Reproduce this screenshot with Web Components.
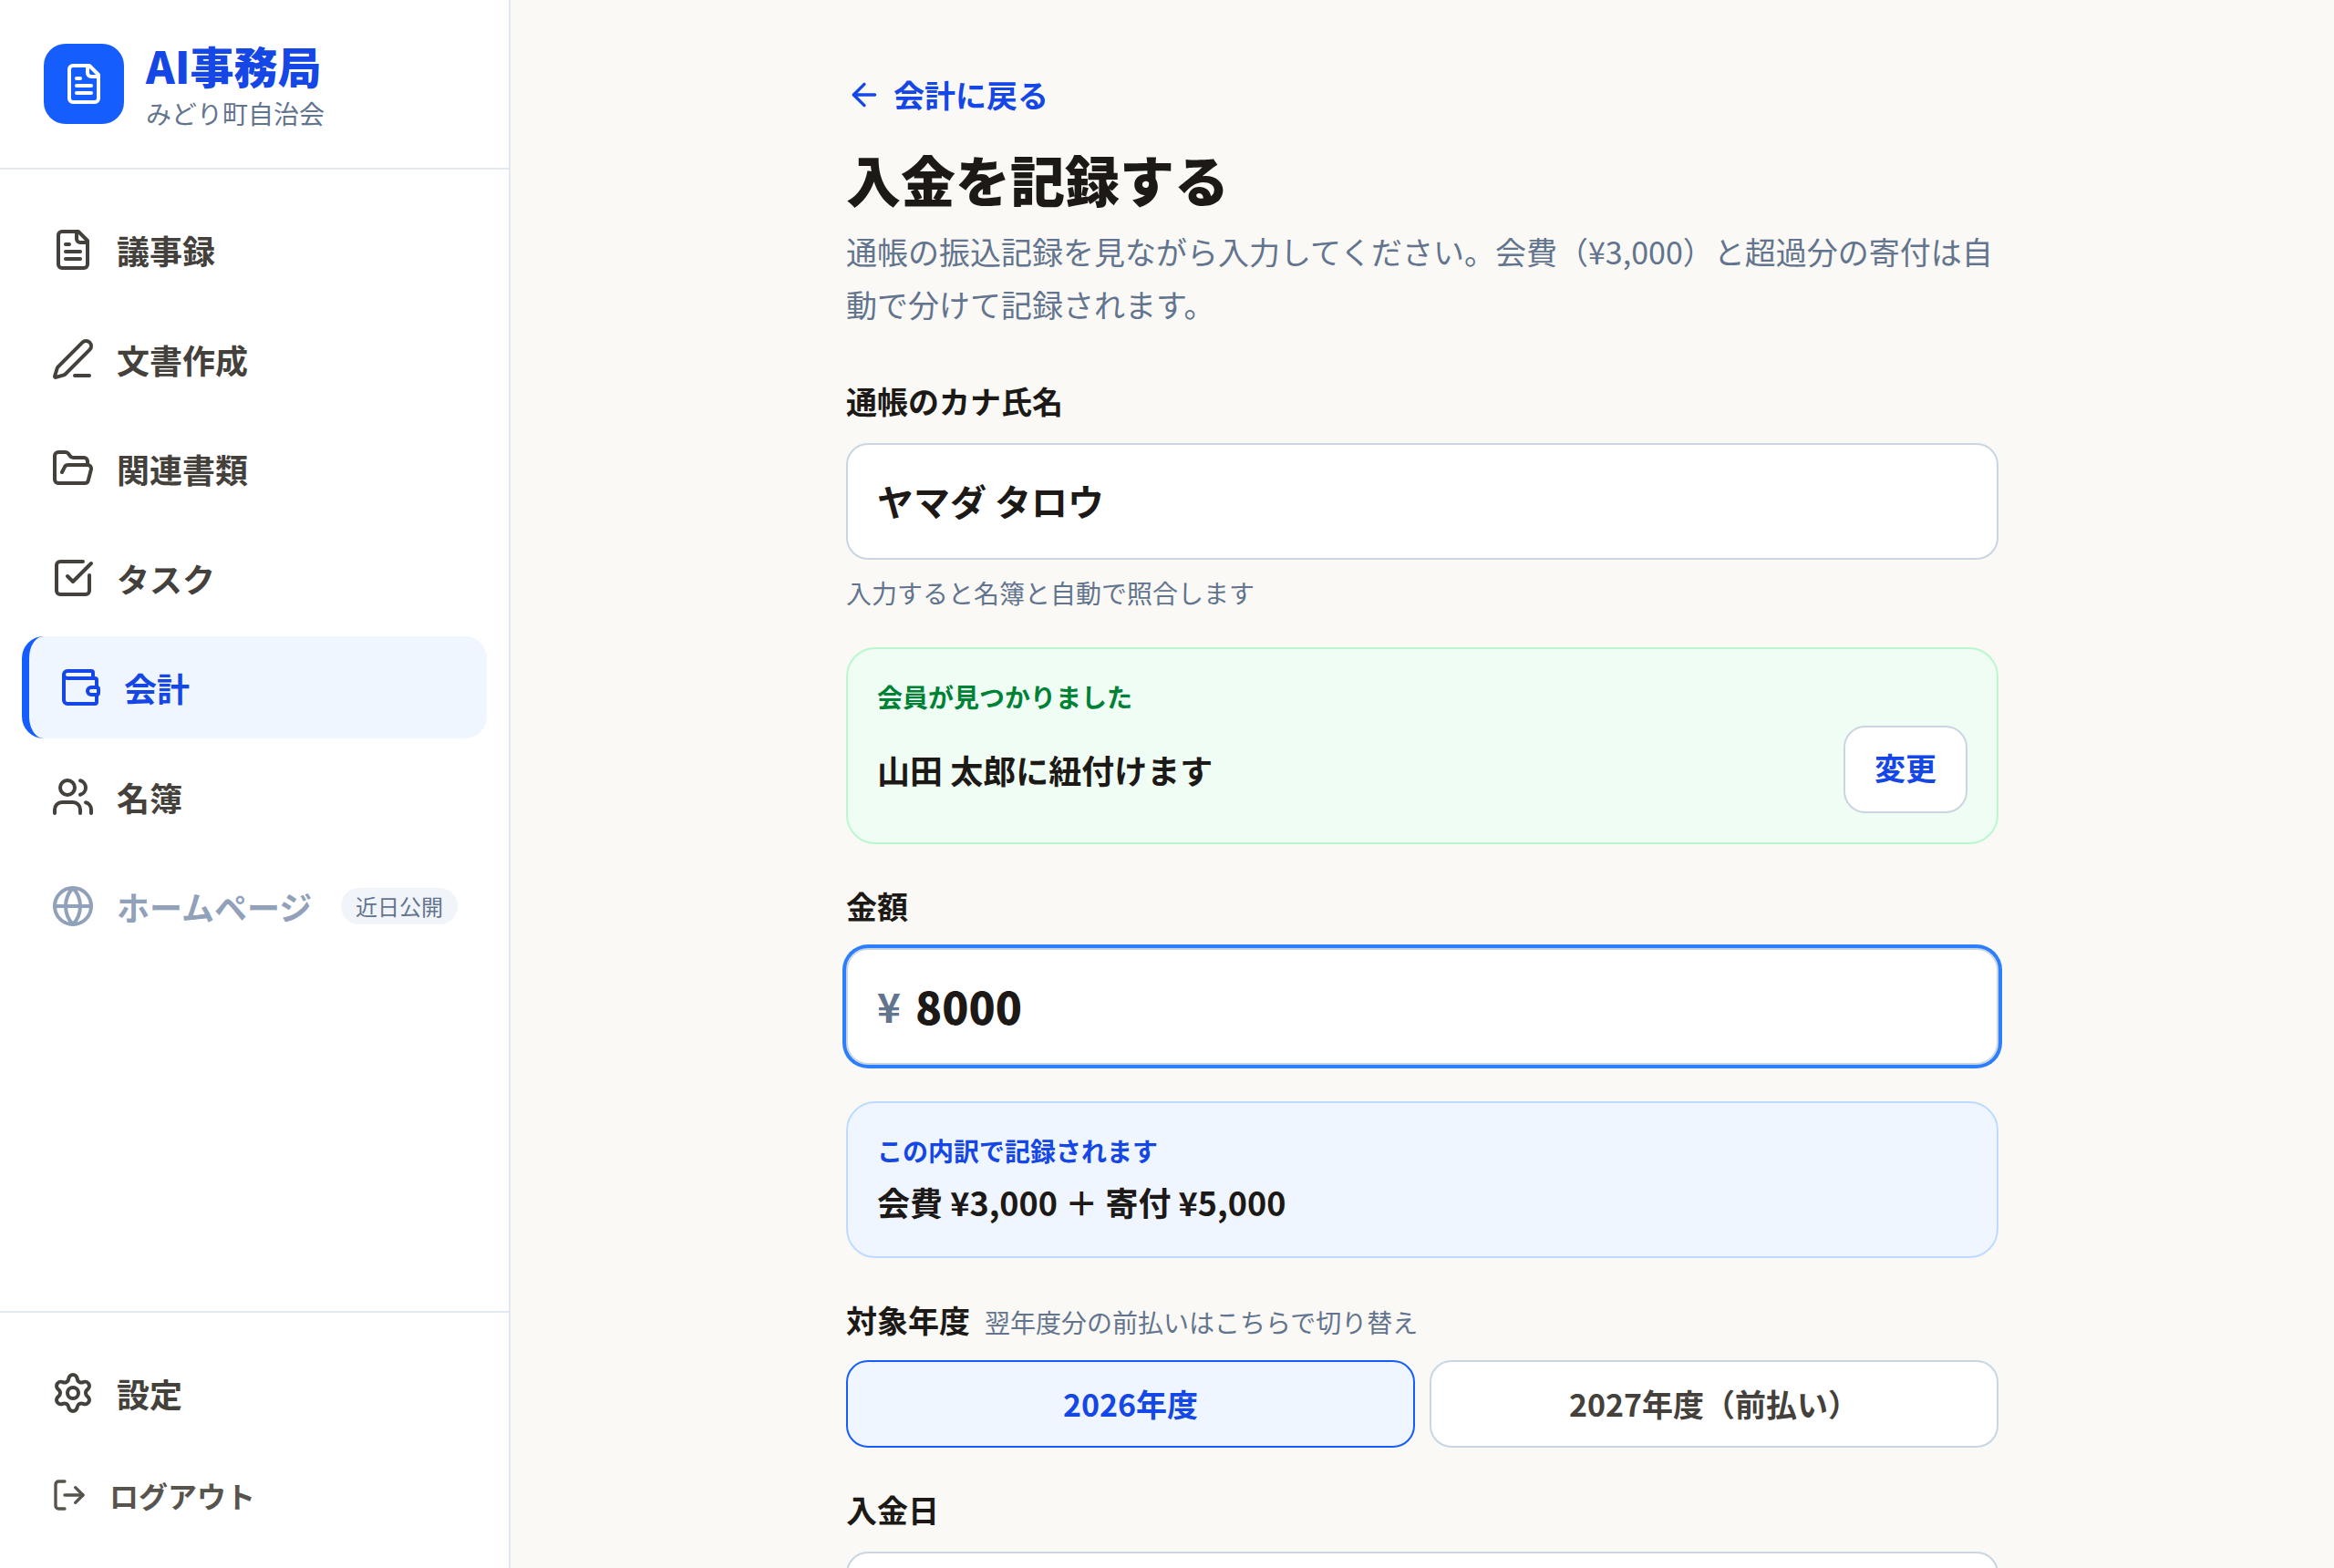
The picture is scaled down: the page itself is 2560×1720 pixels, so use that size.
<!DOCTYPE html>
<html lang="ja">
<head>
<meta charset="utf-8">
<title>入金を記録する | AI事務局</title>
<style>
  html, body { margin: 0; height: 100%; }
  body {
    overflow: hidden;
    font-family: "Noto Sans CJK JP", "Noto Sans", sans-serif;
    color: #1c1917;
    --blue: #155dfc;
    --blue-dark: #1447e6;
    --blue-soft: #eff6ff;
    --muted: #62748e;
    --line: #e2e8f0;
    --border: #cad5e2;
    --page: #faf9f5;
  }
</style>
</head>
<body>
<app-shell>
  <app-sidebar slot="sidebar">
    <brand-mark slot="brand" org="みどり町自治会">AI事務局</brand-mark>
    <nav-item icon="file">議事録</nav-item>
    <nav-item icon="pen">文書作成</nav-item>
    <nav-item icon="folder">関連書類</nav-item>
    <nav-item icon="check">タスク</nav-item>
    <nav-item icon="wallet" active>会計</nav-item>
    <nav-item icon="users">名簿</nav-item>
    <nav-item icon="globe" disabled badge="近日公開">ホームページ</nav-item>
    <nav-item slot="footer" icon="settings">設定</nav-item>
    <nav-item slot="footer" icon="logout" small>ログアウト</nav-item>
  </app-sidebar>

  <page-header back="会計に戻る" heading="入金を記録する">通帳の振込記録を見ながら入力してください。会費（¥3,000）と超過分の寄付は自動で分けて記録されます。</page-header>

  <form-field label="通帳のカナ氏名" help="入力すると名簿と自動で照合します">
    <text-box>ヤマダ タロウ</text-box>
  </form-field>

  <info-card tone="green" heading="会員が見つかりました">
    山田 太郎に紐付けます
    <choice-button slot="action" link>変更</choice-button>
  </info-card>

  <form-field label="金額">
    <text-box prefix="¥" focused>8000</text-box>
  </form-field>

  <info-card tone="blue" heading="この内訳で記録されます">会費 ¥3,000 ＋ 寄付 ¥5,000</info-card>

  <form-field label="対象年度" hint="翌年度分の前払いはこちらで切り替え">
    <choice-button selected>2026年度</choice-button>
    <choice-button>2027年度（前払い）</choice-button>
  </form-field>

  <form-field label="入金日">
    <text-box></text-box>
  </form-field>
</app-shell>

<script>
const ICONS = {
  file: '<path d="M15 2H6a2 2 0 0 0-2 2v16a2 2 0 0 0 2 2h12a2 2 0 0 0 2-2V7Z"/><path d="M14 2v4a2 2 0 0 0 2 2h4"/><path d="M10 9H8"/><path d="M16 13H8"/><path d="M16 17H8"/>',
  pen: '<path d="M13 21h8"/><path d="M21.174 6.812a1 1 0 0 0-3.986-3.987L3.842 16.174a2 2 0 0 0-.5.83l-1.321 4.352a.5.5 0 0 0 .623.622l4.353-1.32a2 2 0 0 0 .83-.497z"/>',
  folder: '<path d="m6 14 1.5-2.9A2 2 0 0 1 9.24 10H20a2 2 0 0 1 1.94 2.5l-1.54 6a2 2 0 0 1-1.95 1.5H4a2 2 0 0 1-2-2V5a2 2 0 0 1 2-2h3.9a2 2 0 0 1 1.69.9l.81 1.2a2 2 0 0 0 1.67.9H18a2 2 0 0 1 2 2v2"/>',
  check: '<path d="M21 10.5V19a2 2 0 0 1-2 2H5a2 2 0 0 1-2-2V5a2 2 0 0 1 2-2h12.5"/><path d="m9 11 3 3L22 4"/>',
  wallet: '<path d="M19 7V4a1 1 0 0 0-1-1H5a2 2 0 0 0 0 4h15a1 1 0 0 1 1 1v4h-3a2 2 0 0 0 0 4h3a1 1 0 0 0 1-1v-2a1 1 0 0 0-1-1"/><path d="M3 5v14a2 2 0 0 0 2 2h15a1 1 0 0 0 1-1v-4"/>',
  users: '<path d="M16 21v-2a4 4 0 0 0-4-4H6a4 4 0 0 0-4 4v2"/><path d="M16 3.128a4 4 0 0 1 0 7.744"/><path d="M22 21v-2a4 4 0 0 0-3-3.87"/><circle cx="9" cy="7" r="4"/>',
  globe: '<circle cx="12" cy="12" r="10"/><path d="M12 2a14.5 14.5 0 0 0 0 20 14.5 14.5 0 0 0 0-20"/><path d="M2 12h20"/>',
  settings: '<path d="M9.671 4.136a2.34 2.34 0 0 1 4.659 0 2.34 2.34 0 0 0 3.319 1.915 2.34 2.34 0 0 1 2.33 4.033 2.34 2.34 0 0 0 0 3.831 2.34 2.34 0 0 1-2.33 4.033 2.34 2.34 0 0 0-3.319 1.915 2.34 2.34 0 0 1-4.659 0 2.34 2.34 0 0 0-3.32-1.915 2.34 2.34 0 0 1-2.33-4.033 2.34 2.34 0 0 0 0-3.831A2.34 2.34 0 0 1 6.35 6.051a2.34 2.34 0 0 0 3.319-1.915"/><circle cx="12" cy="12" r="3"/>',
  logout: '<path d="m16 17 5-5-5-5"/><path d="M21 12H9"/><path d="M9 21H5a2 2 0 0 1-2-2V5a2 2 0 0 1 2-2h4"/>',
  back: '<path d="m12 19-7-7 7-7"/><path d="M19 12H5"/>'
};

class LineIcon extends HTMLElement {
  constructor() {
    super();
    this.attachShadow({ mode: "open" });
  }

  connectedCallback() {
    this.shadowRoot.innerHTML = `
      <style>
        :host { display: block; flex: none; width: 48px; height: 48px; }
        svg { display: block; width: 100%; height: 100%; }
      </style>
      <svg viewBox="0 0 24 24" fill="none" stroke="currentColor" stroke-width="2" stroke-linecap="round" stroke-linejoin="round" aria-hidden="true">${ICONS[this.getAttribute("name")] || ""}</svg>
    `;
  }
}

class AppShell extends HTMLElement {
  constructor() {
    super();
    this.attachShadow({ mode: "open" });
    this.shadowRoot.innerHTML = `
      <style>
        :host {
          display: grid;
          grid-template-columns: 560px 1fr;
          height: 100vh;
          overflow: hidden;
          background: var(--page);
        }
        main {
          min-width: 0;
          overflow: hidden;
        }
        .column {
          display: flex;
          flex-direction: column;
          gap: 40px;
          width: 1264px;
          margin: 0 auto;
          padding: 64px 0;
        }
      </style>
      <slot name="sidebar"></slot>
      <main><div class="column"><slot></slot></div></main>
    `;
  }
}

class AppSidebar extends HTMLElement {
  constructor() {
    super();
    this.attachShadow({ mode: "open" });
    this.shadowRoot.innerHTML = `
      <style>
        :host {
          display: flex;
          flex-direction: column;
          box-sizing: border-box;
          height: 100vh;
          background: #fff;
          border-right: 2px solid var(--line);
        }
        header {
          padding: 48px;
          border-bottom: 2px solid var(--line);
        }
        nav, footer {
          display: flex;
          flex-direction: column;
          gap: 8px;
          padding: 32px 24px;
        }
        nav { flex: 1; }
        footer { border-top: 2px solid var(--line); }
      </style>
      <header><slot name="brand"></slot></header>
      <nav><slot></slot></nav>
      <footer><slot name="footer"></slot></footer>
    `;
  }
}

class BrandMark extends HTMLElement {
  constructor() {
    super();
    this.attachShadow({ mode: "open" });
  }

  connectedCallback() {
    this.shadowRoot.innerHTML = `
      <style>
        :host { display: flex; align-items: center; gap: 24px; height: 88px; }
        .tile {
          display: grid;
          place-items: center;
          width: 88px;
          height: 88px;
          border-radius: 24px;
          background: var(--blue);
          color: #fff;
        }
        .name {
          font-size: 48px;
          font-weight: 800;
          line-height: 60px;
          color: var(--blue-dark);
        }
        .org {
          margin-top: 3px;
          font-size: 28px;
          line-height: 40px;
          color: var(--muted);
        }
      </style>
      <div class="tile"><line-icon name="file"></line-icon></div>
      <div>
        <div class="name"><slot></slot></div>
        <div class="org">${this.getAttribute("org")}</div>
      </div>
    `;
  }
}

class NavItem extends HTMLElement {
  constructor() {
    super();
    this.attachShadow({ mode: "open" });
  }

  connectedCallback() {
    const badge = this.getAttribute("badge");
    this.shadowRoot.innerHTML = `
      <style>
        :host {
          display: flex;
          align-items: center;
          gap: 24px;
          box-sizing: border-box;
          height: 112px;
          padding: 0 32px;
          border-radius: 24px;
          font-size: 36px;
          font-weight: 700;
          line-height: 56px;
          color: #44403b;
          white-space: nowrap;
        }
        :host([active]) {
          border-left: 8px solid var(--blue);
          background: var(--blue-soft);
          color: var(--blue-dark);
        }
        :host([disabled]) { color: #90a1b9; }
        :host([small]) {
          height: 96px;
          font-size: 32px;
          color: #57534d;
        }
        :host([small]) line-icon { width: 40px; height: 40px; }
        .badge {
          margin-left: auto;
          padding: 0 16px;
          border-radius: 20px;
          background: #f1f5f9;
          font-size: 24px;
          font-weight: 400;
          line-height: 40px;
          color: var(--muted);
        }
      </style>
      <line-icon name="${this.getAttribute("icon")}"></line-icon>
      <span><slot></slot></span>
      ${badge ? `<span class="badge">${badge}</span>` : ""}
    `;
  }
}

class PageHeader extends HTMLElement {
  constructor() {
    super();
    this.attachShadow({ mode: "open" });
  }

  connectedCallback() {
    this.shadowRoot.innerHTML = `
      <style>
        :host { display: block; margin-bottom: 9px; }
        a {
          display: inline-flex;
          align-items: center;
          gap: 12px;
          height: 80px;
          font-size: 34px;
          font-weight: 700;
          color: var(--blue-dark);
          text-decoration: none;
        }
        a line-icon { width: 40px; height: 40px; }
        a span { padding-bottom: 2px; }
        h1 {
          margin: 16px 0 15px;
          font-size: 60px;
          font-weight: 800;
          line-height: 72px;
        }
        p {
          margin: 0;
          font-size: 34px;
          line-height: 58px;
          color: var(--muted);
        }
        .top { display: flex; }
      </style>
      <div class="top"><a href="#"><line-icon name="back"></line-icon><span>${this.getAttribute("back")}</span></a></div>
      <h1>${this.getAttribute("heading")}</h1>
      <p><slot></slot></p>
    `;
  }
}

class FormField extends HTMLElement {
  constructor() {
    super();
    this.attachShadow({ mode: "open" });
  }

  connectedCallback() {
    const help = this.getAttribute("help");
    const hint = this.getAttribute("hint");
    this.shadowRoot.innerHTML = `
      <style>
        :host { display: block; }
        .label {
          display: flex;
          align-items: baseline;
          gap: 16px;
          height: 56px;
          margin-bottom: 18px;
          font-size: 34px;
          font-weight: 700;
          line-height: 56px;
        }
        .label.hinted { margin-bottom: 16px; }
        .hint, .help {
          font-size: 28px;
          font-weight: 400;
          color: var(--muted);
        }
        .help { margin-top: 16px; line-height: 40px; }
        .controls { display: flex; gap: 16px; }
        ::slotted(*) { flex: 1; }
      </style>
      <div class="label${hint ? " hinted" : ""}"><span>${this.getAttribute("label")}</span>${hint ? `<span class="hint">${hint}</span>` : ""}</div>
      <div class="controls"><slot></slot></div>
      ${help ? `<div class="help">${help}</div>` : ""}
    `;
  }
}

class TextBox extends HTMLElement {
  constructor() {
    super();
    this.attachShadow({ mode: "open" });
  }

  connectedCallback() {
    const prefix = this.getAttribute("prefix");
    this.shadowRoot.innerHTML = `
      <style>
        :host {
          display: flex;
          align-items: center;
          gap: 16px;
          box-sizing: border-box;
          height: 128px;
          padding: 0 32px 2px;
          border: 2px solid var(--border);
          border-radius: 24px;
          background: #fff;
          font-size: 40px;
          font-weight: 700;
        }
        :host([focused]) { box-shadow: 0 0 0 4px #2b7fff; }
        :host([prefix]) { font-size: 48px; font-weight: 800; }
        .prefix { font-size: 44px; font-weight: 700; color: var(--muted); }
      </style>
      ${prefix ? `<span class="prefix">${prefix}</span>` : ""}
      <span><slot></slot></span>
    `;
  }
}

class InfoCard extends HTMLElement {
  constructor() {
    super();
    this.attachShadow({ mode: "open" });
  }

  connectedCallback() {
    this.shadowRoot.innerHTML = `
      <style>
        :host {
          display: block;
          padding: 32px;
          border: 2px solid #bedbff;
          border-radius: 32px;
          background: var(--blue-soft);
        }
        .heading {
          font-size: 28px;
          font-weight: 700;
          line-height: 40px;
          color: var(--blue-dark);
        }
        .body {
          display: flex;
          align-items: center;
          justify-content: space-between;
          margin-top: 8px;
          font-size: 36px;
          font-weight: 700;
          line-height: 56px;
        }
        :host([tone="green"]) { border-color: #b9f8cf; background: #f0fdf4; }
        :host([tone="green"]) .heading { color: #008236; }
        :host([tone="green"]) .body { margin-top: 12px; }
      </style>
      <div class="heading">${this.getAttribute("heading")}</div>
      <div class="body"><span><slot></slot></span><slot name="action"></slot></div>
    `;
  }
}

class ChoiceButton extends HTMLElement {
  constructor() {
    super();
    this.attachShadow({ mode: "open" });
    this.shadowRoot.innerHTML = `
      <style>
        :host {
          display: flex;
          align-items: center;
          justify-content: center;
          box-sizing: border-box;
          height: 96px;
          padding: 0 32px;
          border: 2px solid var(--border);
          border-radius: 24px;
          background: #fff;
          font-size: 34px;
          font-weight: 700;
          line-height: 58px;
          color: #44403b;
          cursor: pointer;
        }
        :host([link]) { padding-bottom: 4px; color: var(--blue-dark); }
        :host([selected]) {
          border-color: var(--blue);
          background: var(--blue-soft);
          color: var(--blue-dark);
        }
      </style>
      <slot></slot>
    `;
  }
}

customElements.define("line-icon", LineIcon);
customElements.define("app-shell", AppShell);
customElements.define("app-sidebar", AppSidebar);
customElements.define("brand-mark", BrandMark);
customElements.define("nav-item", NavItem);
customElements.define("page-header", PageHeader);
customElements.define("form-field", FormField);
customElements.define("text-box", TextBox);
customElements.define("info-card", InfoCard);
customElements.define("choice-button", ChoiceButton);
</script>
</body>
</html>
